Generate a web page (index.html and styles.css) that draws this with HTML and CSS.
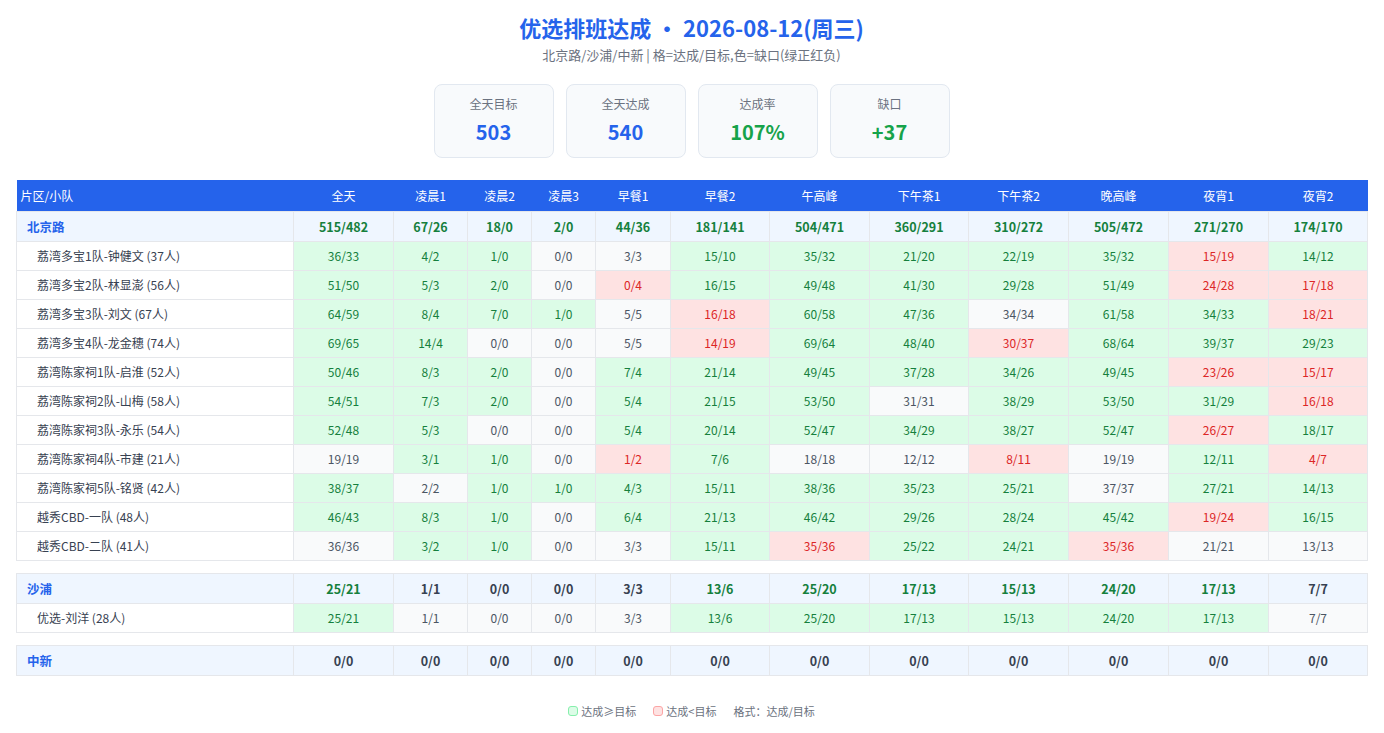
FILE: index.html
```html
<!DOCTYPE html>
<html lang="zh-CN">
<head>
<meta charset="utf-8">
<title>优选排班达成</title>
<link rel="stylesheet" href="styles.css">
</head>
<body>
<div class="page">
  <h1 class="title">优选排班达成 • 2026-08-12(周三)</h1>
  <p class="subtitle">北京路/沙浦/中新 | 格=达成/目标,色=缺口(绿正红负)</p>
  <div class="cards">
    <div class="card"><div class="card-label">全天目标</div><div class="card-value blue">503</div></div>
    <div class="card"><div class="card-label">全天达成</div><div class="card-value blue">540</div></div>
    <div class="card"><div class="card-label">达成率</div><div class="card-value green">107%</div></div>
    <div class="card"><div class="card-label">缺口</div><div class="card-value green">+37</div></div>
  </div>
  <table class="grid">
    <colgroup>
      <col class="c-name"><col class="c100"><col class="c74"><col class="c64"><col class="c64"><col class="c75"><col class="c99"><col class="c100"><col class="c99"><col class="c100"><col class="c100"><col class="c100"><col class="c99">
    </colgroup>
    <thead>
      <tr><th class="h-name">片区/小队</th><th>全天</th><th>凌晨1</th><th>凌晨2</th><th>凌晨3</th><th>早餐1</th><th>早餐2</th><th>午高峰</th><th>下午茶1</th><th>下午茶2</th><th>晚高峰</th><th>夜宵1</th><th>夜宵2</th></tr>
    </thead>
    <tbody>
      <tr class="grp"><td class="g-name">北京路</td><td class="gp">515/482</td><td class="gp">67/26</td><td class="gp">18/0</td><td class="gp">2/0</td><td class="gp">44/36</td><td class="gp">181/141</td><td class="gp">504/471</td><td class="gp">360/291</td><td class="gp">310/272</td><td class="gp">505/472</td><td class="gp">271/270</td><td class="gp">174/170</td></tr>
      <tr><td class="t-name">荔湾多宝1队-钟健文 (37人)</td><td class="p">36/33</td><td class="p">4/2</td><td class="p">1/0</td><td class="z">0/0</td><td class="z">3/3</td><td class="p">15/10</td><td class="p">35/32</td><td class="p">21/20</td><td class="p">22/19</td><td class="p">35/32</td><td class="n">15/19</td><td class="p">14/12</td></tr>
      <tr><td class="t-name">荔湾多宝2队-林显澎 (56人)</td><td class="p">51/50</td><td class="p">5/3</td><td class="p">2/0</td><td class="z">0/0</td><td class="n">0/4</td><td class="p">16/15</td><td class="p">49/48</td><td class="p">41/30</td><td class="p">29/28</td><td class="p">51/49</td><td class="n">24/28</td><td class="n">17/18</td></tr>
      <tr><td class="t-name">荔湾多宝3队-刘文 (67人)</td><td class="p">64/59</td><td class="p">8/4</td><td class="p">7/0</td><td class="p">1/0</td><td class="z">5/5</td><td class="n">16/18</td><td class="p">60/58</td><td class="p">47/36</td><td class="z">34/34</td><td class="p">61/58</td><td class="p">34/33</td><td class="n">18/21</td></tr>
      <tr><td class="t-name">荔湾多宝4队-龙金穗 (74人)</td><td class="p">69/65</td><td class="p">14/4</td><td class="z">0/0</td><td class="z">0/0</td><td class="z">5/5</td><td class="n">14/19</td><td class="p">69/64</td><td class="p">48/40</td><td class="n">30/37</td><td class="p">68/64</td><td class="p">39/37</td><td class="p">29/23</td></tr>
      <tr><td class="t-name">荔湾陈家祠1队-启淮 (52人)</td><td class="p">50/46</td><td class="p">8/3</td><td class="p">2/0</td><td class="z">0/0</td><td class="p">7/4</td><td class="p">21/14</td><td class="p">49/45</td><td class="p">37/28</td><td class="p">34/26</td><td class="p">49/45</td><td class="n">23/26</td><td class="n">15/17</td></tr>
      <tr><td class="t-name">荔湾陈家祠2队-山梅 (58人)</td><td class="p">54/51</td><td class="p">7/3</td><td class="p">2/0</td><td class="z">0/0</td><td class="p">5/4</td><td class="p">21/15</td><td class="p">53/50</td><td class="z">31/31</td><td class="p">38/29</td><td class="p">53/50</td><td class="p">31/29</td><td class="n">16/18</td></tr>
      <tr><td class="t-name">荔湾陈家祠3队-永乐 (54人)</td><td class="p">52/48</td><td class="p">5/3</td><td class="z">0/0</td><td class="z">0/0</td><td class="p">5/4</td><td class="p">20/14</td><td class="p">52/47</td><td class="p">34/29</td><td class="p">38/27</td><td class="p">52/47</td><td class="n">26/27</td><td class="p">18/17</td></tr>
      <tr><td class="t-name">荔湾陈家祠4队-市建 (21人)</td><td class="z">19/19</td><td class="p">3/1</td><td class="p">1/0</td><td class="z">0/0</td><td class="n">1/2</td><td class="p">7/6</td><td class="z">18/18</td><td class="z">12/12</td><td class="n">8/11</td><td class="z">19/19</td><td class="p">12/11</td><td class="n">4/7</td></tr>
      <tr><td class="t-name">荔湾陈家祠5队-铭贤 (42人)</td><td class="p">38/37</td><td class="z">2/2</td><td class="p">1/0</td><td class="p">1/0</td><td class="p">4/3</td><td class="p">15/11</td><td class="p">38/36</td><td class="p">35/23</td><td class="p">25/21</td><td class="z">37/37</td><td class="p">27/21</td><td class="p">14/13</td></tr>
      <tr><td class="t-name">越秀CBD-一队 (48人)</td><td class="p">46/43</td><td class="p">8/3</td><td class="p">1/0</td><td class="z">0/0</td><td class="p">6/4</td><td class="p">21/13</td><td class="p">46/42</td><td class="p">29/26</td><td class="p">28/24</td><td class="p">45/42</td><td class="n">19/24</td><td class="p">16/15</td></tr>
      <tr><td class="t-name">越秀CBD-二队 (41人)</td><td class="z">36/36</td><td class="p">3/2</td><td class="p">1/0</td><td class="z">0/0</td><td class="z">3/3</td><td class="p">15/11</td><td class="n">35/36</td><td class="p">25/22</td><td class="p">24/21</td><td class="n">35/36</td><td class="z">21/21</td><td class="z">13/13</td></tr>
      <tr class="spacer"><td colspan="13"></td></tr>
      <tr class="grp"><td class="g-name">沙浦</td><td class="gp">25/21</td><td class="gz">1/1</td><td class="gz">0/0</td><td class="gz">0/0</td><td class="gz">3/3</td><td class="gp">13/6</td><td class="gp">25/20</td><td class="gp">17/13</td><td class="gp">15/13</td><td class="gp">24/20</td><td class="gp">17/13</td><td class="gz">7/7</td></tr>
      <tr><td class="t-name">优选-刘洋 (28人)</td><td class="p">25/21</td><td class="z">1/1</td><td class="z">0/0</td><td class="z">0/0</td><td class="z">3/3</td><td class="p">13/6</td><td class="p">25/20</td><td class="p">17/13</td><td class="p">15/13</td><td class="p">24/20</td><td class="p">17/13</td><td class="z">7/7</td></tr>
      <tr class="spacer"><td colspan="13"></td></tr>
      <tr class="grp"><td class="g-name">中新</td><td class="gz">0/0</td><td class="gz">0/0</td><td class="gz">0/0</td><td class="gz">0/0</td><td class="gz">0/0</td><td class="gz">0/0</td><td class="gz">0/0</td><td class="gz">0/0</td><td class="gz">0/0</td><td class="gz">0/0</td><td class="gz">0/0</td><td class="gz">0/0</td></tr>
    </tbody>
  </table>
  <div class="legend">
    <span class="lg-item"><span class="sw sw-green"></span>达成≥目标</span>
    <span class="lg-item"><span class="sw sw-red"></span>达成&lt;目标</span>
    <span class="lg-item">格式：达成/目标</span>
  </div>
</div>
</body>
</html>
```
FILE: styles.css
```css
* { box-sizing: border-box; }
html, body { margin: 0; padding: 0; background: #ffffff; }
body {
  font-family: "Noto Sans CJK SC", "Noto Sans", sans-serif;
  color: #374151;
}
.page { padding: 0 17px 0 16px; }
.title {
  margin: 11px 0 0;
  text-align: center;
  font-size: 22px;
  line-height: 32px;
  font-weight: 700;
  color: #2563eb;
}
.subtitle {
  margin: 3px 0 0;
  text-align: center;
  font-size: 13px;
  line-height: 18px;
  color: #6b7280;
}
.cards {
  display: flex;
  justify-content: center;
  gap: 12px;
  margin-top: 20px;
}
.card {
  width: 120px;
  height: 74px;
  border: 1px solid #e2e8f0;
  border-radius: 8px;
  background: #f8fafc;
  text-align: center;
  padding-top: 11px;
}
.card-label { font-size: 12px; line-height: 16px; color: #6b7280; }
.card-value { margin-top: 7px; font-size: 20px; line-height: 26px; font-weight: 700; }
.blue { color: #2563eb; }
.green { color: #16a34a; }

.grid {
  margin-top: 22px;
  width: 1351px;
  border-collapse: collapse;
  table-layout: fixed;
  font-size: 12px;
}
.c-name { width: 277px; }
.c100 { width: 100px; }
.c99 { width: 99px; }
.c75 { width: 75px; }
.c74 { width: 74px; }
.c64 { width: 64px; }
.grid th {
  background: #2563eb;
  color: #ffffff;
  font-weight: 400;
  font-size: 12px;
  line-height: 17px;
  padding: 7px 4px;
  text-align: center;
}
.grid th.h-name { text-align: left; }
.grid td {
  border: 1px solid #e5e7eb;
  padding: 6px 4px;
  line-height: 16px;
  text-align: center;
  white-space: nowrap;
}
.grid td.t-name {
  text-align: left;
  padding-left: 20px;
  color: #374151;
  background: #ffffff;
}
.grid td.p { background: #dcfce7; color: #15803d; }
.grid td.n { background: #fee2e2; color: #dc2626; }
.grid td.z { background: #f9fafb; color: #4b5563; }
.grid tr.grp td {
  background: #eff6ff;
  font-weight: 700;
  font-size: 12.5px;
  line-height: 17px;
  padding-top: 6px;
  padding-bottom: 6px;
}
.grid tr.grp td.g-name { text-align: left; padding-left: 10px; color: #2563eb; }
.grid tr.grp td.gp { color: #15803d; }
.grid tr.grp td.gz { color: #374151; }
.grid tr.spacer td {
  border: none;
  padding: 0;
  height: 13px;
  background: #ffffff;
}
.legend {
  margin-top: 27px;
  display: flex;
  justify-content: center;
  gap: 17px;
  font-size: 11px;
  line-height: 16px;
  color: #6b7280;
}
.lg-item { display: inline-flex; align-items: center; }
.sw {
  display: inline-block;
  width: 10px;
  height: 10px;
  border-radius: 3px;
  margin-right: 3px;
}
.sw-green { background: #dcfce7; border: 1px solid #86efac; }
.sw-red { background: #fee2e2; border: 1px solid #fca5a5; }
```
